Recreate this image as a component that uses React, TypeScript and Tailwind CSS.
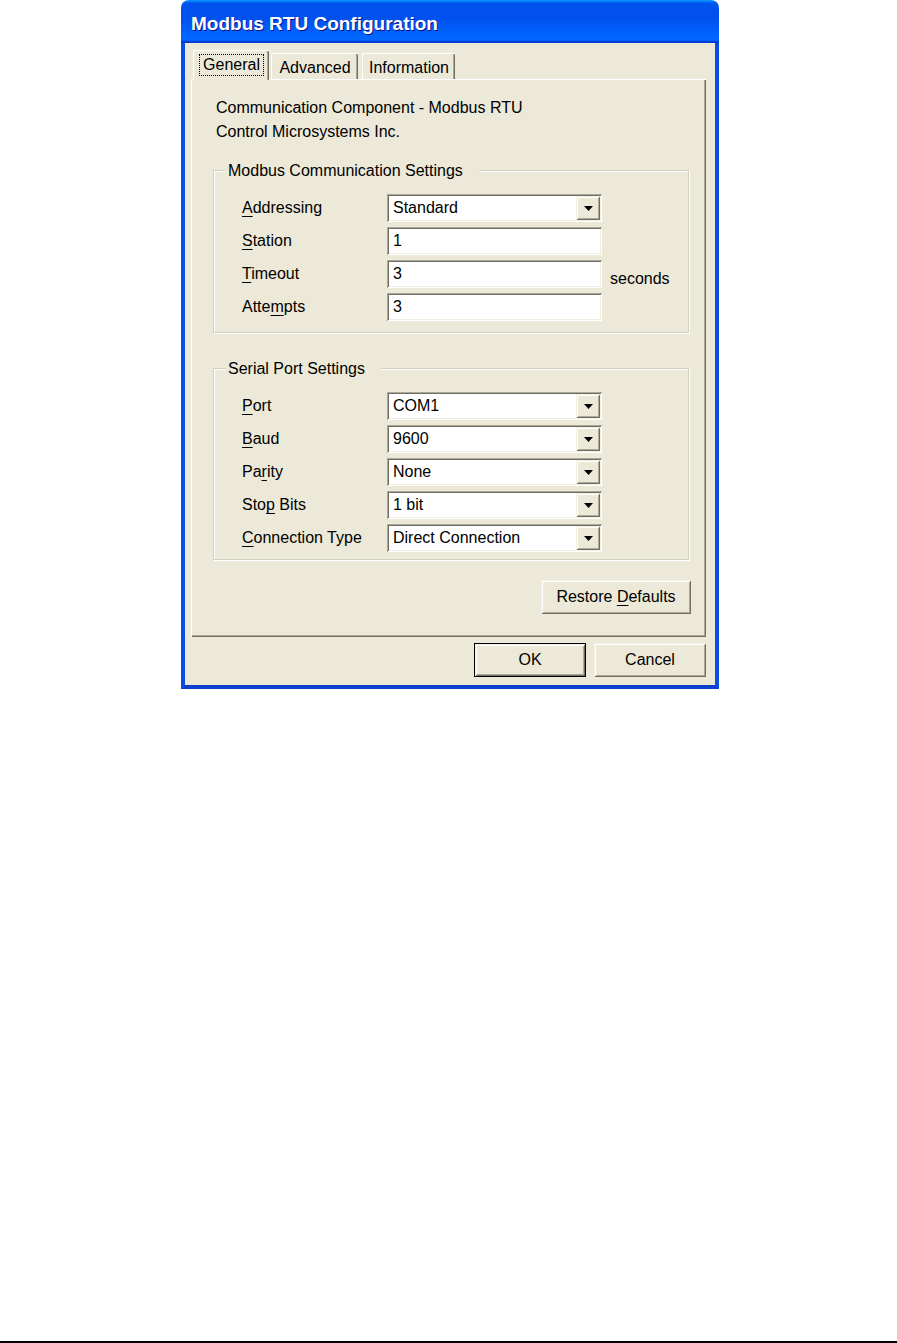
import type { ReactNode } from "react";

const sunken =
  "shadow-[inset_1px_1px_0_#aca899,inset_-1px_-1px_0_#ffffff,inset_2px_2px_0_#716f64,inset_-2px_-2px_0_#f1efe2]";
const raised =
  "shadow-[inset_1px_1px_0_#f1efe2,inset_-1px_-1px_0_#716f64,inset_2px_2px_0_#ffffff,inset_-2px_-2px_0_#aca899]";

const Key = ({ children }: { children: ReactNode }) => (
  <u className="underline decoration-1 underline-offset-[3px]">{children}</u>
);

function DropButton() {
  return (
    <div className={`mr-[2px] flex h-[24px] w-[24px] items-center justify-center bg-[#ece9d8] ${raised}`}>
      <svg width="9" height="5" viewBox="0 0 9 5">
        <path d="M0 0h9L4.5 5z" fill="#000" />
      </svg>
    </div>
  );
}

function Field({ value, combo }: { value: string; combo?: boolean }) {
  return (
    <div className={`flex h-[28px] w-[215px] items-center bg-white ${sunken}`}>
      <span className="flex-1 pl-[6px] leading-none">{value}</span>
      {combo && <DropButton />}
    </div>
  );
}

function Row({ label, value, combo, suffix }: { label: ReactNode; value: string; combo?: boolean; suffix?: string }) {
  return (
    <div className="flex h-[28px] items-center">
      <div className="w-[145px]">{label}</div>
      <Field value={value} combo={combo} />
      {suffix && <span className="ml-[8px] pt-[9px]">{suffix}</span>}
    </div>
  );
}

function Group({ title, children, className }: { title: string; children: ReactNode; className: string }) {
  return (
    <div
      className={`relative ml-[21px] w-[476px] border border-[#d0d0bf] pl-[28px] pt-[23px] shadow-[inset_1px_1px_0_#ffffff,1px_1px_0_#ffffff] ${className}`}
    >
      <span className="absolute -top-[11px] left-[12px] bg-[#ece9d8] pl-[2px] pr-[16px] leading-[22px]">{title}</span>
      <div className="flex flex-col gap-[5px]">{children}</div>
    </div>
  );
}

function Button({ children, width, primary }: { children: ReactNode; width: string; primary?: boolean }) {
  return (
    <div
      className={`flex h-[34px] items-center justify-center bg-[#ece9d8] ${width} ${
        primary ? "border border-black" : ""
      } ${raised}`}
    >
      {children}
    </div>
  );
}

export default function App() {
  return (
    <div
      className="flex h-[1343px] w-[897px] flex-col bg-white text-[16px] text-black"
      style={{ fontFamily: '"Liberation Sans", Arial, sans-serif' }}
    >
      <div className="ml-[181px] flex h-[689px] w-[538px] flex-col">
        <div className="flex h-[43px] items-center rounded-t-[8px] bg-[linear-gradient(180deg,#0997ff,#0053ee_8%,#0050ee_40%,#0066ff_88%,#0066ff_93%,#005bff_95%,#003dd7_96%,#003dd7)] pl-[10px] pt-[6px] text-[19px] font-bold text-white [text-shadow:1px_1px_0_#0f1089]">
          Modbus RTU Configuration
        </div>
        <div className="flex flex-1 flex-col border-x-4 border-b-4 border-x-[#0a4ee4] border-b-[#0a3fd0] bg-[#ece9d8] pl-[6px] pt-[7px]">
          <div className="flex h-[29px] items-end">
            <div className="relative z-10 ml-[2px] -mb-px flex h-[30px] w-[76px] items-start justify-center rounded-t-[2px] border-l border-t border-white bg-[#ece9d8] pt-[3px] shadow-[inset_-1px_0_0_#716f64,inset_-2px_0_0_#aca899]">
              <span className="border border-dotted border-black px-[3px] leading-[20px]">General</span>
            </div>
            <div className="ml-[2px] flex h-[26px] w-[87px] items-center justify-center rounded-t-[2px] border-l border-t border-white pt-[2px] shadow-[inset_-1px_0_0_#716f64,inset_-2px_0_0_#aca899]">
              Advanced
            </div>
            <div className="ml-[4px] flex h-[26px] w-[93px] items-center justify-center rounded-t-[2px] border-l border-t border-white pt-[2px] shadow-[inset_-1px_0_0_#716f64,inset_-2px_0_0_#aca899]">
              Information
            </div>
          </div>

          <div className="flex h-[558px] w-[515px] flex-col border-l border-t border-white pt-[16px] shadow-[inset_-1px_-1px_0_#716f64,inset_-2px_-2px_0_#aca899]">
            <div className="ml-[24px] leading-[24px]">
              <div>Communication Component - Modbus RTU</div>
              <div>Control Microsystems Inc.</div>
            </div>

            <Group title="Modbus Communication Settings" className="mt-[26px] pb-[11px]">
              <Row label={<><Key>A</Key>ddressing</>} value="Standard" combo />
              <Row label={<><Key>S</Key>tation</>} value="1" />
              <Row label={<><Key>T</Key>imeout</>} value="3" suffix="seconds" />
              <Row label={<>Atte<Key>m</Key>pts</>} value="3" />
            </Group>

            <Group title="Serial Port Settings" className="mt-[35px] pb-[7px]">
              <Row label={<><Key>P</Key>ort</>} value="COM1" combo />
              <Row label={<><Key>B</Key>aud</>} value="9600" combo />
              <Row label={<>Pa<Key>r</Key>ity</>} value="None" combo />
              <Row label={<>Sto<Key>p</Key> Bits</>} value="1 bit" combo />
              <Row label={<><Key>C</Key>onnection Type</>} value="Direct Connection" combo />
            </Group>

            <div className="ml-[21px] mt-[20px] flex w-[478px] justify-end">
              <Button width="w-[150px]">
                Restore&nbsp;<Key>D</Key>efaults
              </Button>
            </div>
          </div>

          <div className="mt-[6px] flex w-[515px] justify-end gap-[8px]">
            <Button width="w-[112px]" primary>
              OK
            </Button>
            <Button width="w-[112px]">Cancel</Button>
          </div>
        </div>
      </div>
      <div className="mt-auto h-[2px] bg-black" />
    </div>
  );
}
